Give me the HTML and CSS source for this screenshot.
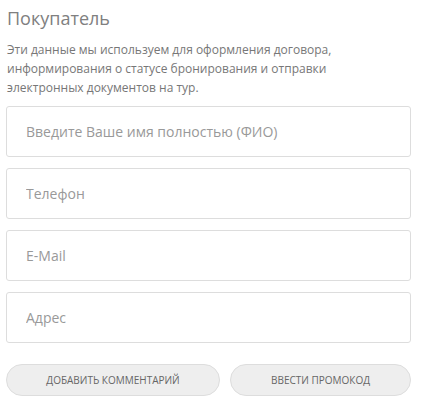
FILE: index.html
```html
<!DOCTYPE html>
<html>
<head>
    <title>Покупатель</title>
    <link rel="stylesheet" href="styles.css">
</head>
<body>
    <div class="buyer">
        <h2>Покупатель</h2>
        <p class="note">Эти данные мы используем для оформления договора, информирования о статусе бронирования и отправки электронных документов на тур.</p>

        <div class="fields">
            <input type="text" placeholder="Введите Ваше имя полностью (ФИО)">
            <input type="text" placeholder="Телефон">
            <input type="text" placeholder="E-Mail">
            <input type="text" placeholder="Адрес">
        </div>

        <div class="actions">
            <button class="btn btn-comment">Добавить комментарий</button>
            <button class="btn btn-promo">Ввести промокод</button>
        </div>
    </div>
</body>
</html>
```

FILE: styles.css
```css
body { margin: 0; padding: 6px; font-family: "Open Sans", Arial, sans-serif; background: #fff; }
.buyer { width: 405px; }
h2 { margin: 0; padding: 0 0 0 1px; font-size: 18px; font-weight: normal; color: #808080; line-height: 24px; }
.note { max-width: 365px; margin: 10px 0 9px 1px; font-size: 12px; line-height: 19px; color: #777; }
.fields { display: flex; flex-direction: column; gap: 11px; }
input { box-sizing: border-box; height: 51px; width: 100%; border: 1px solid #ddd; border-radius: 3px; padding: 0 19px; font-family: inherit; font-size: 14px; color: #555; outline: none; }
input::placeholder { color: #999; }
.actions { display: flex; gap: 10px; margin-top: 21px; }
.btn { height: 32px; border: 1px solid #ddd; border-radius: 16px; background: #eee; color: #666; font-family: inherit; font-size: 10px; text-transform: uppercase; cursor: pointer; }
.btn-comment { width: 214px; }
.btn-promo { width: 181px; }
```
